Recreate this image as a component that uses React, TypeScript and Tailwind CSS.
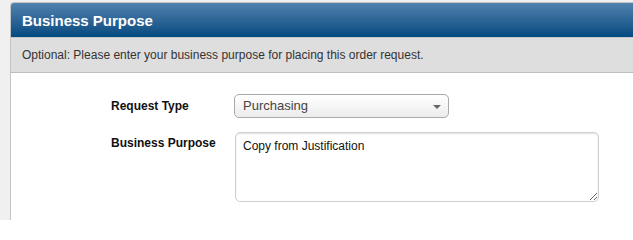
export default function App() {
  return (
    <div
      className="w-[633px] h-[220px] overflow-hidden bg-[#f0f0f0] pt-[2px] pl-[10px]"
      style={{ fontFamily: '"Liberation Sans", Arial, sans-serif' }}
    >
      <div className="h-full bg-white border-l border-t border-[#c4c4c4] rounded-tl-[4px] overflow-hidden">
        <div className="h-[34px] bg-gradient-to-b from-[#4f82ad] to-[#004a80] flex items-center pl-[11px]">
          <h2 className="text-[15px] font-bold text-white leading-none">Business Purpose</h2>
        </div>
        <div className="h-[36px] bg-[#dedede] border-t border-[#c8c8c8] border-b border-b-[#bdbdbd] flex items-center pl-[11px]">
          <p className="text-[12px] text-[#333]">
            Optional: Please enter your business purpose for placing this order request.
          </p>
        </div>

        <div className="pt-[21px] pl-[100px] grid grid-cols-[123px_1fr] gap-y-[14px]">
          <label className="text-[12px] font-bold text-[#111] pt-[3px]">Request Type</label>
          <div className="relative w-[215px] h-[24px] rounded-[5px] border border-[#a9a9a9] bg-gradient-to-b from-white to-[#ececec] flex items-center pl-[8px]">
            <span className="text-[13px] text-[#444]">Purchasing</span>
            <span className="absolute right-[7px] top-[10px] w-0 h-0 border-l-[4px] border-r-[4px] border-t-[4px] border-l-transparent border-r-transparent border-t-[#666]" />
          </div>

          <label className="text-[12px] font-bold text-[#111] pt-[2px]">Business Purpose</label>
          <textarea
            defaultValue="Copy from Justification"
            className="ml-[1px] w-[364px] h-[70px] rounded-[5px] border border-[#cfcfcf] shadow-[inset_0_1px_2px_rgba(0,0,0,0.12)] px-[7px] pt-[6px] text-[12px] text-[#111] leading-[14px] outline-none"
            style={{ fontFamily: '"Liberation Sans", Arial, sans-serif' }}
          />
        </div>
      </div>
    </div>
  )
}
